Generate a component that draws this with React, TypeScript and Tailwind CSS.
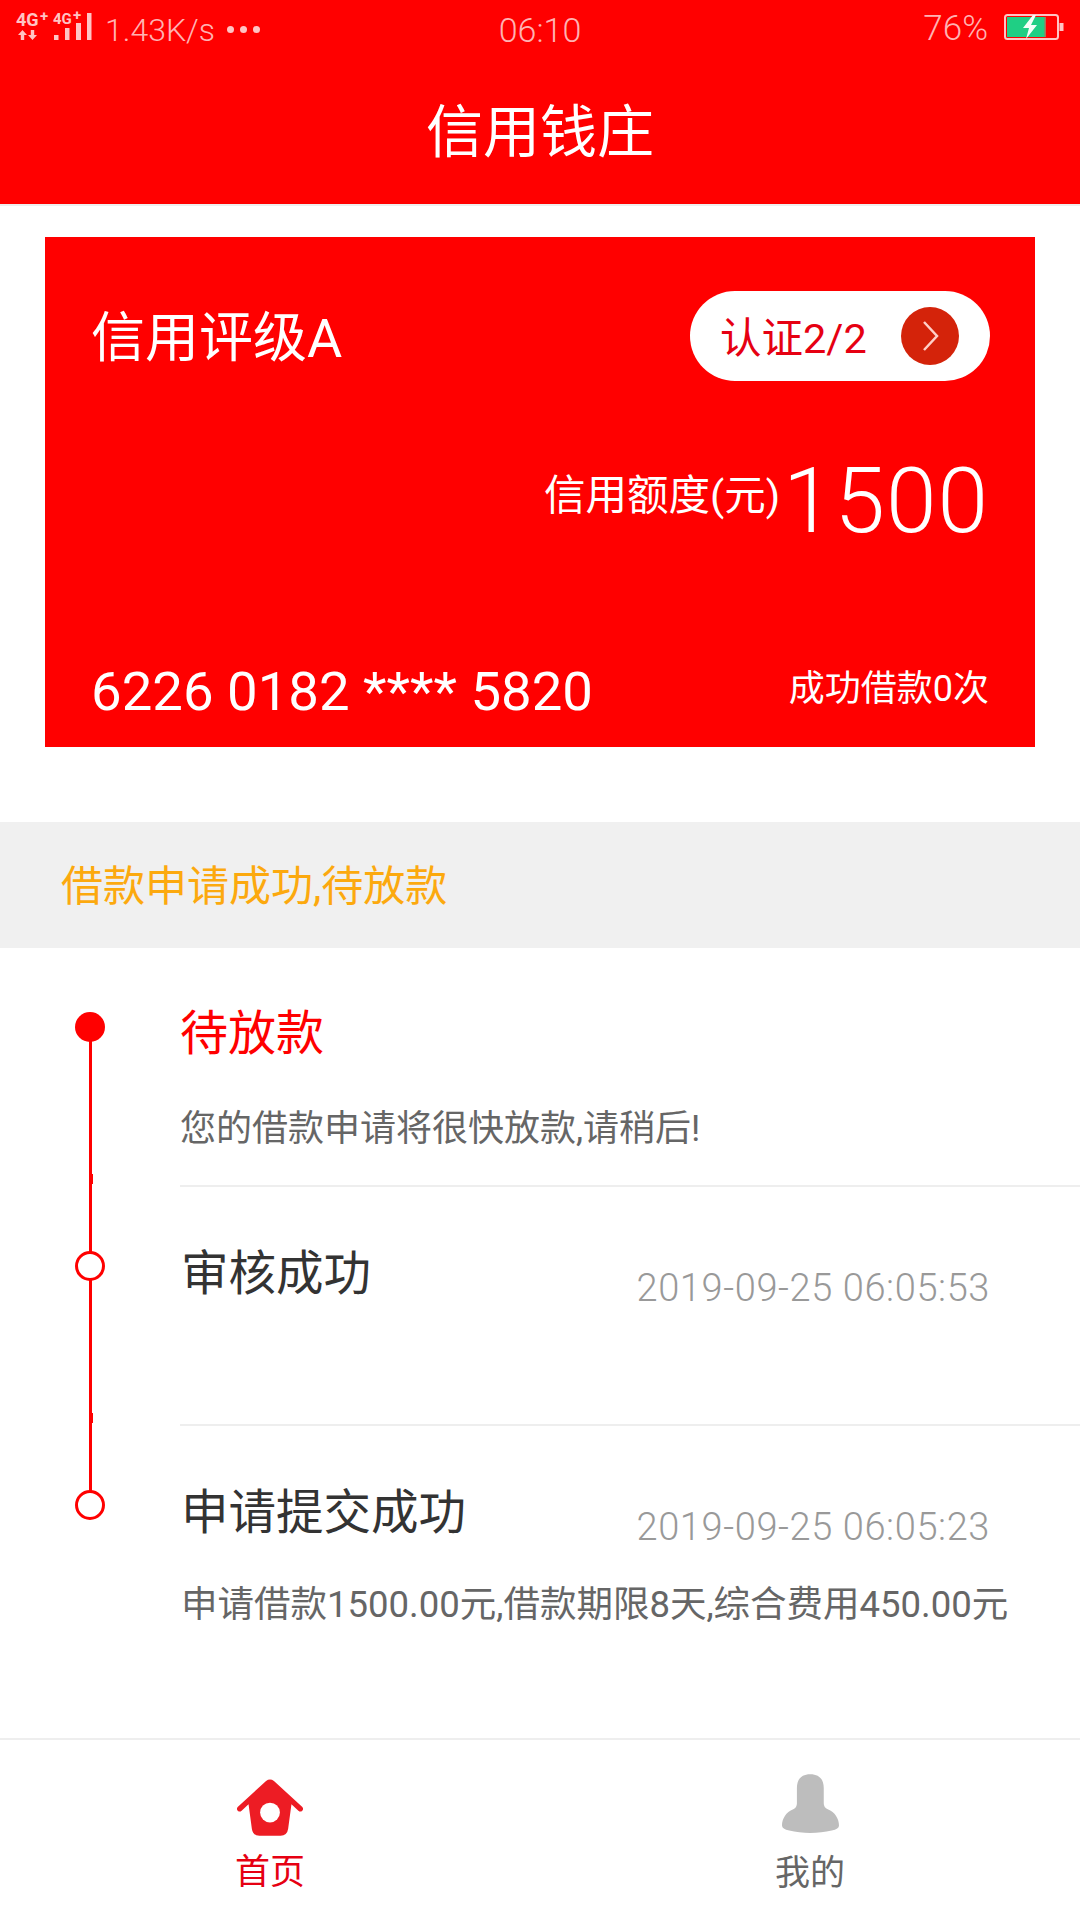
const font = { fontFamily: '"Roboto","Noto Sans CJK SC",sans-serif' };

function StatusBar() {
  return (
    <div className="h-[60px] flex items-center justify-between relative text-[#ffb3b3] pl-[15px] pr-[16px]">
      <div className="flex items-center">
        <svg width="80" height="60" viewBox="0 -8 80 60" fill="#ffc4c4">
          <text x="1" y="18" fontSize="18" fontWeight="700" fontFamily="Roboto">4G</text>
          <text x="25" y="13" fontSize="15" fontWeight="700" fontFamily="Roboto">+</text>
          <path d="M7.500 22l4.500 5H9.200v5H5.800v-5H3zM17.500 32l4.500-5h-2.800v-5h-3.400v5H13z" />
          <text x="38" y="16" fontSize="15" fontWeight="700" fontFamily="Roboto">4G</text>
          <text x="58" y="12" fontSize="15" fontWeight="700" fontFamily="Roboto">+</text>
          <rect x="39" y="27" width="4.500" height="5" />
          <rect x="50" y="20" width="4.500" height="12" />
          <rect x="61" y="15" width="5" height="17" />
          <rect x="72" y="5" width="4.500" height="27" />
        </svg>
        <span className="text-[32px] leading-none ml-[10px] font-light">1.43K/s</span>
        <span className="flex gap-[6px] ml-[12px] mb-[2px]">
          <i className="w-[7px] h-[7px] rounded-full bg-[#ffc4c4]" />
          <i className="w-[7px] h-[7px] rounded-full bg-[#ffc4c4]" />
          <i className="w-[7px] h-[7px] rounded-full bg-[#ffc4c4]" />
        </span>
      </div>
      <span className="absolute left-0 right-0 text-center text-[34px] leading-none font-light">06:10</span>
      <div className="flex items-center">
        <span className="text-[35px] leading-none mr-[16px] mb-[4px] font-light">76%</span>
        <svg width="60" height="26" viewBox="0 0 60 26" className="mb-[7px]">
          <rect x="1" y="1" width="53" height="24" rx="2.500" fill="none" stroke="#ffc4c4" strokeWidth="2" />
          <rect x="3" y="3" width="39" height="20" fill="#1fcf84" />
          <rect x="40.500" y="3" width="1.500" height="20" fill="#a8745a" />
          <rect x="55.500" y="9" width="4" height="8" fill="#ffc4c4" />
          <path d="M29 1l-10 13h6l-3 11 11-14h-6l5-10z" fill="#f4fff8" />
        </svg>
      </div>
    </div>
  );
}

export default function App() {
  return (
    <div className="w-[1080px] h-[1920px] bg-white flex flex-col overflow-hidden relative" style={font}>
      <div className="bg-[#ff0000] h-[204px] shrink-0">
        <StatusBar />
        <div className="h-[144px] flex items-center justify-center text-white text-[57px] leading-none">信用钱庄</div>
      </div>
      <div className="h-[2px] bg-[#eeeeee] shrink-0" />

      <div className="mx-[45px] mt-[31px] h-[510px] bg-[#ff0000] shrink-0 px-[46px] flex flex-col text-white">
        <div className="flex items-center justify-between pt-[54px]">
          <span className="text-[54px] leading-none mt-[6px]">信用评级A</span>
          <div className="h-[90px] w-[300px] -mr-[1px] rounded-full bg-white flex items-center justify-between pl-[30px] pr-[31px]">
            <span className="text-[#e60012] text-[41.500px] leading-none mt-[6px]">认证2/2</span>
            <span className="w-[58px] h-[58px] rounded-full bg-[#d4230a] flex items-center justify-center">
              <svg width="20" height="32" viewBox="0 0 20 32" fill="none" stroke="#ffd0c8" strokeWidth="2.500">
                <path d="M4 2l13 14L4 30" />
              </svg>
            </span>
          </div>
        </div>
        <div className="flex items-end justify-end mt-[75px]">
          <span className="text-[41.500px] leading-none pb-[31px] pr-[3px]">信用额度(元)</span>
          <span className="text-[91px] leading-none font-light tracking-[1px]">1500</span>
        </div>
        <div className="flex items-center justify-between mt-[117px]">
          <span className="text-[54.500px] leading-none">6226 0182 **** 5820</span>
          <span className="text-[36px] leading-none pb-[5px]">成功借款0次</span>
        </div>
      </div>

      <div className="mt-[75px] h-[126px] bg-[#f0f0f0] shrink-0 flex items-center pl-[61px] pt-[3px] text-[42px] text-[#fca90e]">
        借款申请成功,待放款
      </div>

      <div className="relative flex-1">
        <div className="absolute left-[89px] top-[79px] w-[3px] h-[478px] bg-[#ff0000]" />
        <div className="absolute left-[89px] top-[226px] w-[4px] h-[10px] bg-[#ff0000]" />
        <div className="absolute left-[89px] top-[465px] w-[4px] h-[10px] bg-[#ff0000]" />
        <div className="absolute left-[75px] top-[64px] w-[30px] h-[30px] rounded-full bg-[#ff0000]" />
        <div className="absolute left-[75px] top-[303px] w-[30px] h-[30px] rounded-full bg-white border-[3px] border-[#ff0000]" />
        <div className="absolute left-[75px] top-[542px] w-[30px] h-[30px] rounded-full bg-white border-[3px] border-[#ff0000]" />

        <div className="ml-[180px] h-[239px] border-b-2 border-[#eeeeee] pt-[62px]">
          <div className="text-[48px] leading-none text-[#ff0000]">待放款</div>
          <div className="text-[36px] leading-none text-[#666666] mt-[53px]">您的借款申请将很快放款,请稍后!</div>
        </div>
        <div className="ml-[180px] h-[239px] border-b-2 border-[#eeeeee] pr-[90px] pt-[64px] flex justify-between pl-[1px]">
          <div className="text-[47.500px] leading-none text-[#333333]">审核成功</div>
          <div className="text-[38px] leading-none text-[#999999] mt-[18px] font-light tracking-[0.6px]">2019-09-25 06:05:53</div>
        </div>
        <div className="ml-[180px] pt-[64px] pl-[1px]">
          <div className="flex justify-between pr-[90px]">
            <div className="text-[47.500px] leading-none text-[#333333]">申请提交成功</div>
            <div className="text-[38px] leading-none text-[#999999] mt-[18px] font-light tracking-[0.6px]">2019-09-25 06:05:23</div>
          </div>
          <div className="text-[36.500px] leading-none text-[#666666] mt-[41px] whitespace-nowrap">申请借款1500.00元,借款期限8天,综合费用450.00元</div>
        </div>
      </div>

      <div className="h-[182px] shrink-0 border-t-2 border-[#eeeeee] flex">
        <div className="w-[540px] flex flex-col items-center pt-[39px]">
          <svg width="66" height="57" viewBox="0 0 200 171">
            <path d="M88 5 Q100 -4 112 5 L198 84 Q203 91 197 96 Q191 100 186 95 L165 76 L155 150 Q152 171 132 171 L68 171 Q48 171 45 150 L35 76 L14 95 Q9 100 3 96 Q-3 91 2 84 Z" fill="#ed1c24" />
            <circle cx="100" cy="101" r="30" fill="#fff" />
          </svg>
          <span className="text-[35px] leading-none text-[#e60012] mt-[19px]">首页</span>
        </div>
        <div className="w-[540px] flex flex-col items-center pt-[34px]">
          <svg width="57" height="59" viewBox="0 0 172 177" fill="#bdbdbd">
            <path d="M85 0 C115 0 126 18 126 42 L126 88 Q126 102 138 106 C160 114 172 135 172 155 Q172 166 150 170 C110 180 60 180 22 170 Q0 166 0 155 C0 135 12 114 34 106 Q45 102 45 88 L45 42 C45 18 56 0 85 0 Z" />
          </svg>
          <span className="text-[35px] leading-none text-[#666666] mt-[23px]">我的</span>
        </div>
      </div>
    </div>
  );
}
